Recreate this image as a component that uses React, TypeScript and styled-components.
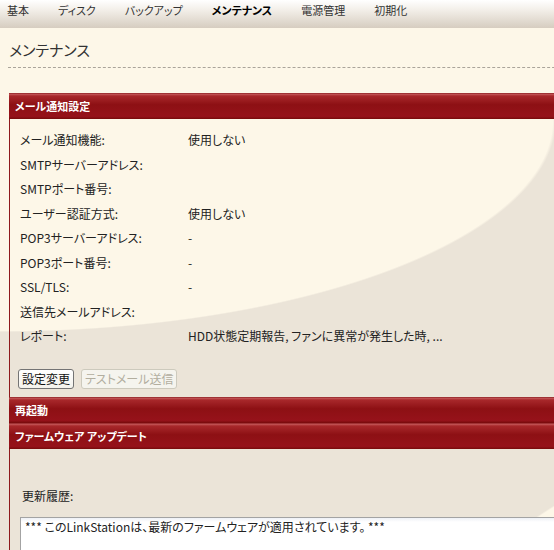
import { Fragment } from "react";
import styled, { createGlobalStyle, css } from "styled-components";

const CREAM = "#fdf7e8";
const BEIGE = "#ebe4d8";

const GlobalStyle = createGlobalStyle`
    html, body {
        margin: 0;
        padding: 0;
        overflow: hidden;
    }
    body {
        font-family: "Noto Sans CJK JP", "Liberation Sans", sans-serif;
        font-feature-settings: "palt";
        font-size: 12px;
        color: #222;
        background-color: ${BEIGE};
        background-image:
            linear-gradient(${CREAM}, ${CREAM}),
            radial-gradient(ellipse 556px 212px at 0px 120px, ${CREAM} 99.4%, transparent 100%),
            radial-gradient(ellipse 340px 270px at 760px 720px, ${CREAM} 99.4%, transparent 100%);
        background-size: 100% 120px, 100% 100%, 100% 100%;
        background-repeat: no-repeat;
        min-height: 550px;
    }
`;

const Page = styled.div`
    width: 620px;
`;

// Top navigation
const NavBar = styled.nav`
    display: flex;
    gap: 29px;
    height: 28px;
    padding-left: 7px;
    box-sizing: border-box;
    background: linear-gradient(#ffffff 0%, #f3efe9 35%, #d6cdc0 100%);
`;

const NavItem = styled.div<{ $active?: boolean }>`
    position: relative;
    padding-top: 3px;
    font-size: 11px;
    line-height: 14px;
    color: #333;
    white-space: nowrap;

    ${(p) =>
        p.$active &&
        css`
            font-weight: bold;
            color: #000;

            &::after {
                content: "";
                position: absolute;
                left: 50%;
                bottom: -11px;
                margin-left: -1px;
                border-left: 7px solid transparent;
                border-right: 7px solid transparent;
                border-bottom: 7px solid ${CREAM};
            }
        `}
`;

const Content = styled.div`
    padding-left: 9px;
`;

const Title = styled.h1`
    margin: 12px 0 0 -1px;
    padding: 0 0 7px 1px;
    font-size: 15px;
    font-weight: normal;
    line-height: 20px;
    color: #333;
    border-bottom: 1px dashed #aaa49a;
`;

// Panel parts
const Panel = styled.section`
    margin-top: 25px;
`;

const SectionHeader = styled.div`
    height: 26px;
    box-sizing: border-box;
    padding-left: 6px;
    display: flex;
    align-items: center;
    font-size: 11px;
    font-weight: bold;
    color: #fff;
    background: linear-gradient(
        #7a0b0e 0px,
        #c65a5c 1px,
        #a8282b 3px,
        #8d1014 45%,
        #96121a 90%,
        #760a0b 100%
    );
`;

const SectionBody = styled.div<{ $top: number; $bottom: number }>`
    border-left: 1px solid #8e1a1c;
    padding: ${(p) => p.$top}px 0 ${(p) => p.$bottom}px 10px;
`;

const FieldGrid = styled.div`
    display: grid;
    grid-template-columns: 168px 1fr;
    grid-auto-rows: 24.5px;
    align-items: center;
`;

const Label = styled.div`
    line-height: 16px;
    white-space: nowrap;
`;

const Value = styled.div`
    line-height: 16px;
    white-space: nowrap;
`;

const ButtonRow = styled.div`
    display: flex;
    gap: 7px;
    margin: 20.5px 0 0 -2px;
`;

const Button = styled.button`
    height: 20px;
    padding: 0 3px;
    font-family: inherit;
    font-feature-settings: "palt";
    font-size: 12px;
    line-height: 16px;
    color: #111;
    background: linear-gradient(#ffffff, #f4f2ec);
    border: 1px solid #747474;
    border-radius: 3px;
    cursor: pointer;

    &:disabled {
        color: #b2ae9f;
        background: #f5f4ee;
        border-color: #cdcabd;
        cursor: default;
    }
`;

const HistoryLabel = styled.div`
    padding-left: 2px;
    line-height: 16px;
`;

const HistoryBox = styled.textarea`
    display: block;
    margin-top: 13px;
    width: 600px;
    height: 90px;
    box-sizing: border-box;
    padding: 1px 4px;
    font-family: inherit;
    font-feature-settings: "palt";
    font-size: 12px;
    line-height: 16px;
    color: #222;
    background: linear-gradient(#eef1f6 0px, #ffffff 4px);
    border: 1px solid #a3a3a3;
    resize: none;
    overflow: hidden;
    outline: none;
`;

const navItems = ["基本", "ディスク", "バックアップ", "メンテナンス", "電源管理", "初期化"];

const mailFields: [string, string][] = [
    ["メール通知機能:", "使用しない"],
    ["SMTPサーバーアドレス:", ""],
    ["SMTPポート番号:", ""],
    ["ユーザー認証方式:", "使用しない"],
    ["POP3サーバーアドレス:", "-"],
    ["POP3ポート番号:", "-"],
    ["SSL/TLS:", "-"],
    ["送信先メールアドレス:", ""],
    ["レポート:", "HDD状態定期報告, ファンに異常が発生した時, ..."],
];

export default function App() {
    return (
        <Page>
            <GlobalStyle />
            <NavBar>
                {navItems.map((item) => (
                    <NavItem key={item} $active={item === "メンテナンス"}>
                        {item}
                    </NavItem>
                ))}
            </NavBar>

            <Content>
                <Title>メンテナンス</Title>

                <Panel>
                    <SectionHeader>メール通知設定</SectionHeader>
                    <SectionBody $top={9} $bottom={8}>
                        <FieldGrid>
                            {mailFields.map(([label, value]) => (
                                <Fragment key={label}>
                                    <Label>{label}</Label>
                                    <Value>{value}</Value>
                                </Fragment>
                            ))}
                        </FieldGrid>
                        <ButtonRow>
                            <Button>設定変更</Button>
                            <Button disabled>テストメール送信</Button>
                        </ButtonRow>
                    </SectionBody>

                    <SectionHeader>再起動</SectionHeader>
                    <SectionHeader>ファームウェア アップデート</SectionHeader>
                    <SectionBody $top={39} $bottom={20}>
                        <HistoryLabel>更新履歴:</HistoryLabel>
                        <HistoryBox
                            readOnly
                            value="*** このLinkStationは、最新のファームウェアが適用されています。 ***"
                        />
                    </SectionBody>
                </Panel>
            </Content>
        </Page>
    );
}
